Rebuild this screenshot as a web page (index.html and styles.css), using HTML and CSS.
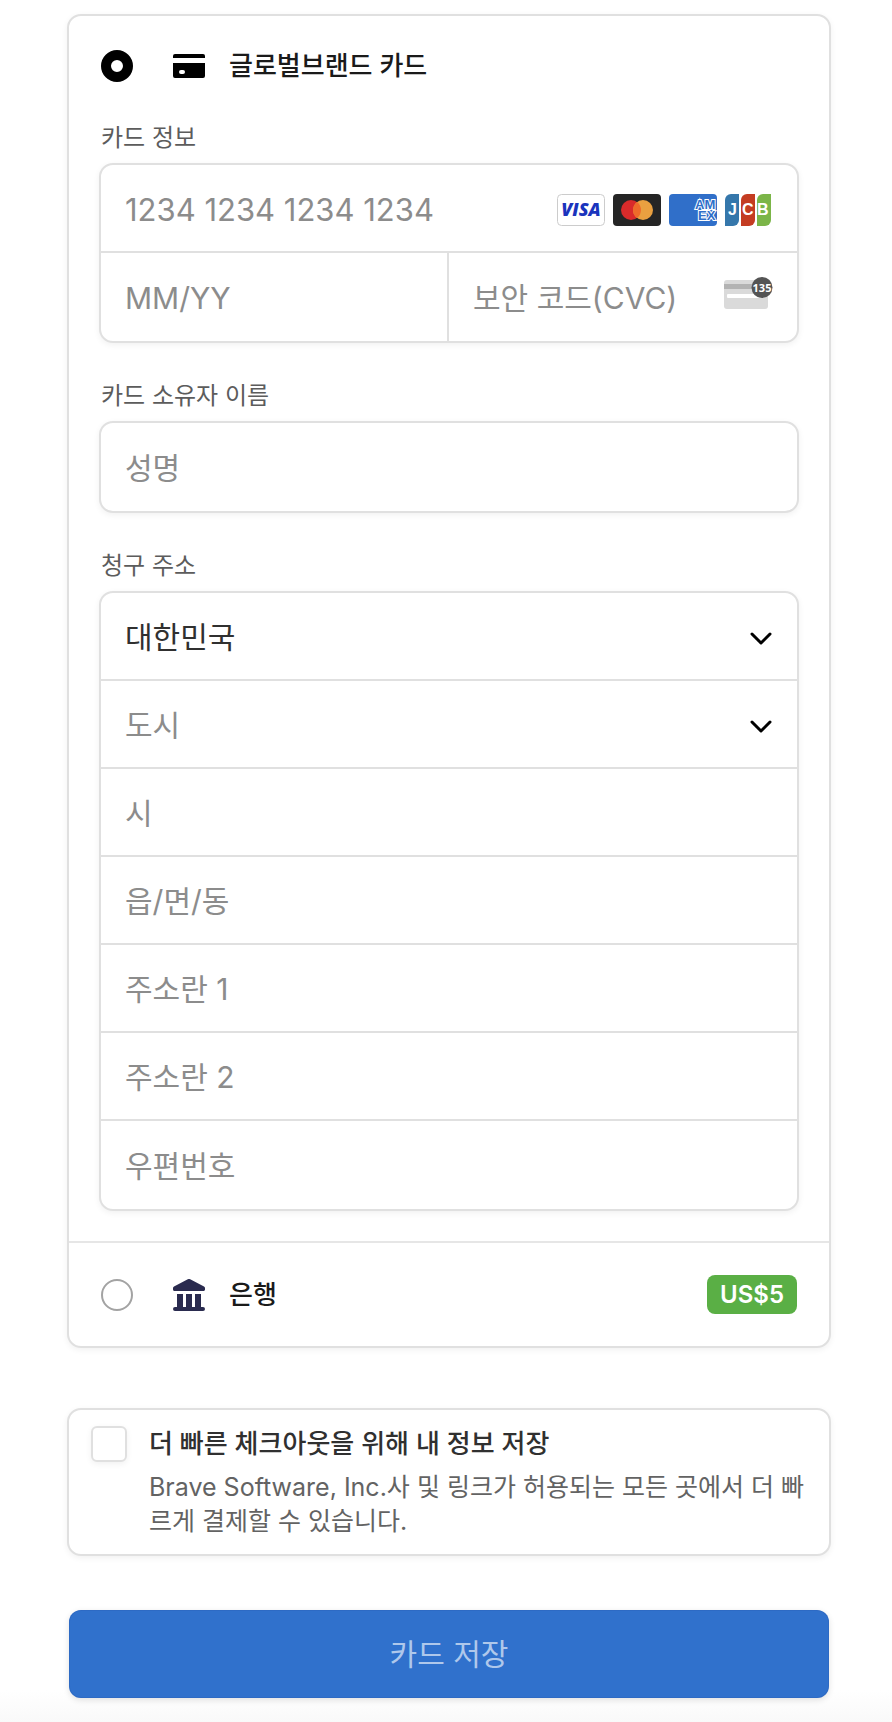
FILE: index.html
```html
<!DOCTYPE html>
<html lang="ko">
<head>
<meta charset="utf-8">
<meta name="viewport" content="width=device-width, initial-scale=1">
<title>카드 저장</title>
<link rel="stylesheet" href="styles.css">
</head>
<body>
<form class="checkout">
  <section class="methods">
    <div class="method">
      <label class="method-head">
        <input class="radio" type="radio" name="method" checked>
        <svg class="method-icon" viewBox="0 0 32 32" aria-hidden="true">
          <path d="M2 4h28a2 2 0 0 1 2 2v2H0V6a2 2 0 0 1 2-2z"/>
          <path fill-rule="evenodd" d="M0 13h32v13a2 2 0 0 1-2 2H2a2 2 0 0 1-2-2zM8 20a2 2 0 0 0 0 4h2a2 2 0 0 0 0-4z"/>
        </svg>
        <span class="method-name">글로벌브랜드 카드</span>
      </label>

      <div class="fields">
        <div class="field">
          <label class="field-label" for="number">카드 정보</label>
          <div class="group">
            <div class="row">
              <input class="input input-number" id="number" type="text" inputmode="numeric" placeholder="1234 1234 1234 1234">
              <div class="brands">
                <svg class="brand" viewBox="0 0 48 32" role="img" aria-label="Visa">
                  <rect x="0.5" y="0.5" width="47" height="31" rx="4" fill="#fff" stroke="#ccc"/>
                  <text class="visa" x="24" y="22" text-anchor="middle">VISA</text>
                </svg>
                <svg class="brand" viewBox="0 0 48 32" role="img" aria-label="Mastercard">
                  <rect width="48" height="32" rx="4" fill="#252525"/>
                  <circle cx="18" cy="16" r="10" fill="#d92b2b"/>
                  <circle cx="30" cy="16" r="10" fill="#e9a040"/>
                  <path d="M24 8a10 10 0 0 1 0 16a10 10 0 0 1 0-16z" fill="#ee6b2a"/>
                </svg>
                <svg class="brand" viewBox="0 0 48 32" role="img" aria-label="American Express">
                  <rect width="48" height="32" rx="4" fill="#306fc9"/>
                  <text class="amex" x="26" y="15">AM</text>
                  <text class="amex" x="29" y="26">EX</text>
                </svg>
                <svg class="brand" viewBox="0 0 48 32" role="img" aria-label="JCB">
                  <path d="M6 0h8v26a6 6 0 0 1-6 6H0V6a6 6 0 0 1 6-6z" fill="#3577ab"/>
                  <path d="M22 0h8v26a6 6 0 0 1-6 6h-8V6a6 6 0 0 1 6-6z" fill="#c43c22"/>
                  <path d="M38 0h8v26a6 6 0 0 1-6 6h-8V6a6 6 0 0 1 6-6z" fill="#7bb548"/>
                  <text class="jcb" x="3" y="21">J</text>
                  <text class="jcb" x="17" y="21">C</text>
                  <text class="jcb" x="32" y="21">B</text>
                </svg>
              </div>
            </div>
            <div class="split">
              <div class="row">
                <input class="input" type="text" inputmode="numeric" placeholder="MM/YY" aria-label="만료일">
              </div>
              <div class="row">
                <input class="input" type="text" inputmode="numeric" placeholder="보안 코드(CVC)" aria-label="보안 코드">
                <svg class="cvc" viewBox="0 0 49 42" aria-hidden="true">
                  <rect y="3" width="44" height="29" rx="3" fill="#dadada"/>
                  <path d="M0 7h44v5H0z" fill="#b3b3b3"/>
                  <rect x="3" y="17" width="32" height="4" rx="1" fill="#fff"/>
                  <circle cx="38" cy="10.500" r="10.500" fill="#545454"/>
                  <text class="cvc-digits" x="38" y="14.500" text-anchor="middle">135</text>
                </svg>
              </div>
            </div>
          </div>
        </div>

        <div class="field">
          <label class="field-label" for="name">카드 소유자 이름</label>
          <div class="group">
            <div class="row"><input class="input" id="name" type="text" placeholder="성명"></div>
          </div>
        </div>

        <div class="field">
          <label class="field-label" for="country">청구 주소</label>
          <div class="group">
            <div class="row">
              <select class="input" id="country"><option>대한민국</option></select>
              <svg class="chevron" viewBox="0 0 24 24" aria-hidden="true"><path d="M3 8l9 9 9-9"/></svg>
            </div>
            <div class="row">
              <select class="input select-empty" aria-label="도시"><option>도시</option></select>
              <svg class="chevron" viewBox="0 0 24 24" aria-hidden="true"><path d="M3 8l9 9 9-9"/></svg>
            </div>
            <div class="row"><input class="input" type="text" placeholder="시" aria-label="시"></div>
            <div class="row"><input class="input" type="text" placeholder="읍/면/동" aria-label="읍/면/동"></div>
            <div class="row"><input class="input" type="text" placeholder="주소란 1" aria-label="주소란 1"></div>
            <div class="row"><input class="input" type="text" placeholder="주소란 2" aria-label="주소란 2"></div>
            <div class="row"><input class="input" type="text" placeholder="우편번호" aria-label="우편번호"></div>
          </div>
        </div>
      </div>
    </div>

    <label class="method-bank">
      <input class="radio" type="radio" name="method">
      <svg class="method-icon bank-icon" viewBox="0 0 32 32" aria-hidden="true">
        <path d="M14.800.300a2.500 2.500 0 0 1 2.400 0l13.800 7.200c.7.400 1 .9 1 1.600v1.400c0 .8-.7 1.500-1.500 1.500h-29C.7 12 0 11.300 0 10.500V9.100c0-.7.300-1.200 1-1.600z"/>
        <path d="M4 15h6v13h3V15h6v13h3V15h6v13h2a2 2 0 0 1 0 4H2a2 2 0 0 1 0-4h2z"/>
      </svg>
      <span class="method-name">은행</span>
      <span class="badge">US$5</span>
    </label>
  </section>

  <section class="save">
    <input class="checkbox" type="checkbox" id="save">
    <div class="save-text">
      <label class="save-title" for="save">더 빠른 체크아웃을 위해 내 정보 저장</label>
      <p class="save-note">Brave Software, Inc.사 및 링크가 허용되는 모든 곳에서 더 빠르게 결제할 수 있습니다.</p>
    </div>
  </section>

  <button class="submit" type="submit">카드 저장</button>
</form>
</body>
</html>
```

FILE: styles.css
```css
* {
  box-sizing: border-box;
}

body {
  margin: 0;
  background: #fff linear-gradient(#fff, #f9f9f9) bottom / 100% 32px no-repeat;
  color: #1a1a1a;
  font-family: Inter, "Noto Sans CJK KR", sans-serif;
}

.checkout {
  padding: 14px 61px 24px 67px;
}

.methods,
.save {
  border: 2px solid #e0e0e0;
  border-radius: 14px;
  background: #fff;
  box-shadow: 0 2px 6px rgba(0, 0, 0, 0.06);
}

.method {
  padding: 34px 32px 30px;
  border-bottom: 2px solid #e6e6e6;
}

.method-head,
.method-bank {
  display: flex;
  align-items: center;
}

.method-bank {
  padding: 32px;
}

.radio {
  appearance: none;
  flex: none;
  width: 32px;
  height: 32px;
  margin: 0 40px 0 0;
  border: 2px solid #a3a3a3;
  border-radius: 50%;
  background: #fff;
}

.radio:checked {
  border: 10px solid #000;
}

.method-icon {
  flex: none;
  width: 32px;
  height: 32px;
  margin-right: 24px;
}

.bank-icon {
  fill: #2a2b4f;
}

.method-name {
  font-size: 26px;
  font-weight: 500;
  line-height: 32px;
}

.badge {
  margin-left: auto;
  padding: 0 13px;
  border-radius: 8px;
  background: #5aaf45;
  color: #fff;
  font-size: 24px;
  font-weight: 600;
  line-height: 39px;
}

.fields {
  display: grid;
  grid-template-columns: minmax(0, 1fr);
  gap: 38px;
  margin-top: 41px;
}

.field {
  display: grid;
  grid-template-columns: minmax(0, 1fr);
  gap: 10px;
}

.field-label {
  color: #5c5c5c;
  font-size: 24px;
  line-height: 30px;
}

.group {
  margin: 0 -2px;
  border: 2px solid #e0e0e0;
  border-radius: 14px;
  background: #fff;
  box-shadow: 0 2px 6px rgba(0, 0, 0, 0.06);
}

.row {
  position: relative;
  display: flex;
  align-items: center;
  height: 88px;
  border-bottom: 2px solid #e0e0e0;
}

.group > .row:last-child,
.split .row {
  border-bottom: 0;
}

.split {
  display: grid;
  grid-template-columns: minmax(0, 1fr) minmax(0, 1fr);
}

.split .row:first-child {
  border-right: 2px solid #e0e0e0;
}

.input {
  appearance: none;
  flex: 1;
  min-width: 0;
  height: 100%;
  padding: 2px 24px 0;
  border: 0;
  border-radius: 12px;
  outline: 0;
  background: transparent;
  color: #303030;
  font-family: inherit;
  font-size: 30px;
}

.input-number {
  font-size: 31px;
}

.input::placeholder {
  color: #8c8c8c;
  opacity: 1;
}

.select-empty {
  color: #8c8c8c;
}

.brands {
  display: flex;
  gap: 8px;
  margin: 4px 24px 0 0;
}

.brand {
  width: 48px;
  height: 32px;
}

.visa {
  fill: #1a34bd;
  font: italic 800 18px "Open Sans", sans-serif;
}

.amex {
  fill: #306fc9;
  stroke: #fff;
  stroke-width: 2px;
  paint-order: stroke;
  font: 800 13px "Liberation Sans", sans-serif;
}

.jcb {
  fill: #fff;
  font: bold 16px "Liberation Sans", sans-serif;
}

.cvc {
  flex: none;
  width: 49px;
  height: 42px;
  margin: 2px 24px 0 0;
}

.cvc-digits {
  fill: #fff;
  font: bold 11px "Noto Sans", sans-serif;
}

.chevron {
  position: absolute;
  right: 24px;
  width: 24px;
  height: 24px;
  margin-top: 4px;
  fill: none;
  stroke: #000;
  stroke-width: 3px;
  stroke-linecap: round;
  stroke-linejoin: round;
  pointer-events: none;
}

.save {
  display: flex;
  gap: 22px;
  margin-top: 60px;
  padding: 16px 22px;
}

.checkbox {
  appearance: none;
  flex: none;
  width: 36px;
  height: 36px;
  margin: 0;
  border: 2px solid #e0e0e0;
  border-radius: 6px;
  background: #fff;
  box-shadow: 0 2px 6px rgba(0, 0, 0, 0.06);
}

.save-title {
  display: block;
  color: #303030;
  font-size: 26px;
  font-weight: 500;
  line-height: 36px;
}

.save-note {
  margin: 8px 0 0;
  color: #636363;
  font-size: 25px;
  line-height: 34px;
}

.submit {
  display: block;
  width: calc(100% - 4px);
  height: 88px;
  margin: 54px 2px 0;
  padding: 0 0 4px;
  border: 0;
  border-radius: 12px;
  background: #3071cc;
  box-shadow: inset 0 0 0 1px rgba(40, 90, 180, 0.3), 0 2px 6px rgba(0, 0, 0, 0.12);
  color: #afc8eb;
  font-family: inherit;
  font-size: 30px;
}
```
